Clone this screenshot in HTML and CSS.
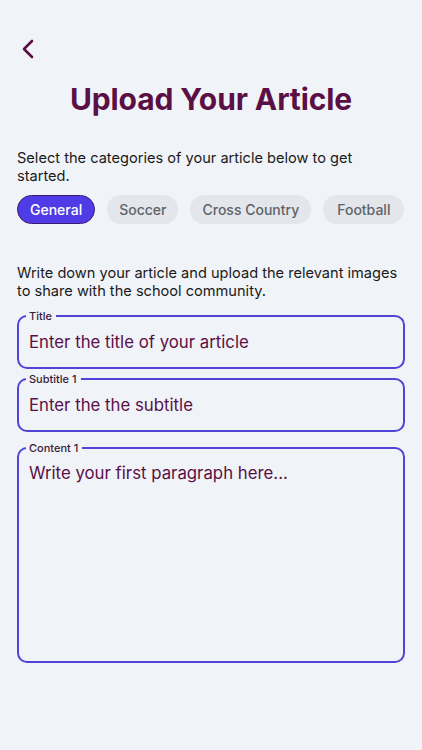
FILE: index.html
```html
<!DOCTYPE html>
<html lang="en">
<head>
    <meta charset="UTF-8">
    <meta name="viewport" content="width=device-width, initial-scale=1.0">
    <title>Upload Your Article</title>
    <link rel="stylesheet" href="styles.css">
</head>
<body>

    <div class="top-bar">
        <a class="back-link" href="#">
            <svg width="14" height="20" viewBox="0 0 14 20">
                <path d="M11 2 L3 10 L11 18" fill="none" stroke="#5a0f45" stroke-width="2.6" stroke-linecap="round" stroke-linejoin="round"/>
            </svg>
        </a>
    </div>

    <h1 class="page-title">Upload Your Article</h1>

    <p class="intro">Select the categories of your article below to get started.</p>

    <div class="chips">
        <button class="chip active">General</button>
        <button class="chip">Soccer</button>
        <button class="chip">Cross Country</button>
        <button class="chip">Football</button>
    </div>

    <p class="intro second">Write down your article and upload the relevant images to share with the school community.</p>

    <fieldset class="field">
        <legend>Title</legend>
        <input type="text" placeholder="Enter the title of your article">
    </fieldset>

    <fieldset class="field">
        <legend>Subtitle 1</legend>
        <input type="text" placeholder="Enter the the subtitle">
    </fieldset>

    <fieldset class="field content">
        <legend>Content 1</legend>
        <textarea placeholder="Write your first paragraph here..."></textarea>
    </fieldset>

</body>
</html>
```

FILE: styles.css
```css
body {
    margin: 0;
    padding: 0 17px;
    background-color: #f0f3f8;
    font-family: Inter, "Noto Sans", sans-serif;
    color: #1a1a1a;
}

.top-bar {
    height: 70px;
    display: flex;
    align-items: flex-start;
    padding-top: 39px;
    box-sizing: border-box;
}

.back-link {
    display: block;
    margin-left: 4px;
    line-height: 0;
}

.page-title {
    margin: 11px 0 0;
    text-align: center;
    font-size: 30px;
    font-weight: 700;
    letter-spacing: -0.1px;
    color: #5a0f45;
}

.intro {
    margin: 32px 0 0;
    font-size: 14.6px;
    line-height: 18px;
    color: #1a1a1a;
}

.intro.second {
    margin-top: 40px;
}

.chips {
    display: flex;
    gap: 12px;
    margin-top: 10px;
}

.chip {
    height: 29px;
    padding: 0 12px;
    border: none;
    border-radius: 15px;
    background-color: #e3e6eb;
    color: #5f6368;
    font-family: inherit;
    font-size: 14px;
    font-weight: 500;
    white-space: nowrap;
}

.chip:last-child {
    padding: 0 14px;
}

.chip.active {
    background-color: #4f3ce6;
    border: 1.5px solid #3a1a70;
    color: #fff;
}

.field {
    margin: 9px 0 0;
    padding: 0 10px;
    border: 2px solid #5143d6;
    border-radius: 10px;
    height: 60px;
    box-sizing: border-box;
}

.field + .field {
    margin-top: 3px;
}

.field.content {
    height: 222px;
    margin-top: 9px;
}

.field legend {
    margin-left: -3px;
    padding: 0 4px 0 3px;
    font-size: 11px;
    font-weight: 500;
    color: #3a1a3a;
}

.field input,
.field textarea {
    display: block;
    width: 100%;
    border: none;
    outline: none;
    background: transparent;
    padding: 0;
    font-family: inherit;
    font-size: 16.8px;
    color: #5a0f45;
}

.field input {
    height: 30px;
    margin-top: 4px;
}

.field textarea {
    resize: none;
    height: 180px;
    margin-top: 8px;
}

.field input::placeholder,
.field textarea::placeholder {
    color: #5a0f45;
    opacity: 1;
}
```
